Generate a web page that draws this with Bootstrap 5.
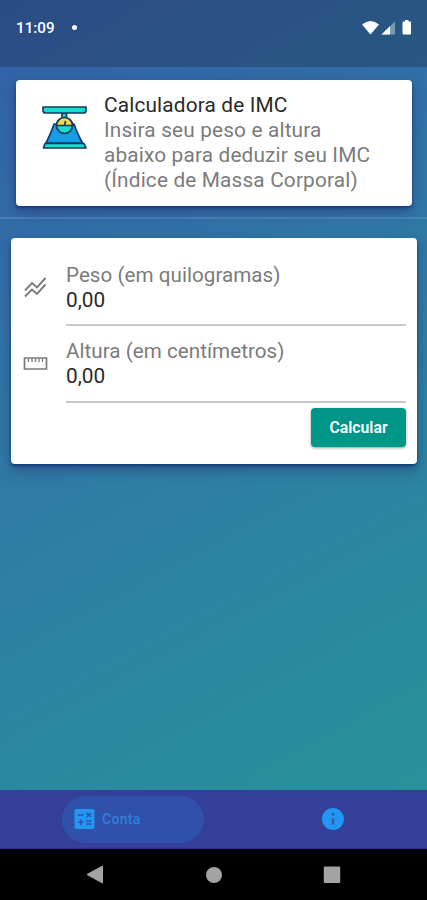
<!DOCTYPE html>
<html lang="pt-BR">
<head>
<meta charset="utf-8">
<meta name="viewport" content="width=device-width, initial-scale=1">
<title>Calculadora de IMC</title>
<link href="https://cdn.jsdelivr.net/npm/bootstrap@5.3.0/dist/css/bootstrap.min.css" rel="stylesheet">
<style>
body{font-family:Roboto,"Liberation Sans",sans-serif;background:#000}
.screen{height:900px;overflow:hidden}
.app-area{height:790px;background:linear-gradient(151.6deg,#345fa9 0%,#2f79a5 45%,#28929c 100%)}
.statusbar{height:67px;background:rgba(22,30,45,.29);color:#fff;font-size:15.2px;font-weight:500;padding:0 15px 11px 16px}
.dot{width:5px;height:5px;margin:0 0 2px 17px;background:#fff}
.header-zone{height:152px;padding:13px 15px 0 16px;border-bottom:2px solid rgba(110,155,205,.42)}
.panel{border:0;border-radius:4px;box-shadow:0 2px 3px rgba(0,45,110,.65),0 6px 13px rgba(45,45,115,.5)}
.intro{height:126px;padding:13px 0 0 24px;gap:16px}
.copy{font-size:20.8px;line-height:25px;letter-spacing:.16px;color:#7b7b7b}
.copy .title{color:#2a2a2a}
.scale-icon{margin-top:10px}
.form-zone{padding:19px 10px 0 11px}
.calc{height:226px;padding:25px 11px 0 12px}
.entry{height:64px;gap:17px}
.entry-one{height:76px}
.entry svg{margin-top:12px}
.entry label{display:block;white-space:nowrap;font-size:20.6px;letter-spacing:.04px}
.value,.value:focus{border:0;border-bottom:2px solid #c8c8c8;border-radius:0;box-shadow:none;padding:0 0 12px;color:#2a2a2a;font-size:20.8px;line-height:25px;height:38px}
.entry-two .value{height:39px;padding-bottom:13px}
.go{width:95px;height:39px;margin-top:5px;padding:0;border:0;border-radius:4px;background:#009688;color:#fff;font-size:15.8px;font-weight:600;box-shadow:0 1px 3px rgba(0,0,0,.4)}
.tabs{height:59px;background:#333f98;border-bottom:1px solid #382c8d;color:#2196f3}
.tab-on{width:142px;height:47px;margin-left:62px;padding-left:11px;gap:5px;background:#2f51a9;font-size:14px;font-weight:500;letter-spacing:.3px;color:#2c82dc}
.info{margin-left:117px}
.sysnav{height:51px;padding:0 86px}
</style>
</head>
<body>
<div class="screen d-flex flex-column">
  <main class="app-area">
    <div class="statusbar d-flex align-items-center">
      <span>11:09</span><span class="dot rounded-circle"></span>
      <svg class="ms-auto" width="50" height="16" viewBox="0 0 50 16" aria-hidden="true">
        <path d="M0 4.500Q8.500-2.500 17 4.500L8.500 14.500Z" fill="#fff"/>
        <path d="M33 1.500V14.500H19.500Z" fill="#fff" opacity=".4"/>
        <path d="M28 6.300V14.500H19.500Z" fill="#fff"/>
        <path d="M43 1.500V0H46.500V1.500H48Q49 1.500 49 2.500V13.500Q49 14.500 48 14.500H41.500Q40.500 14.500 40.500 13.500V2.500Q40.500 1.500 41.500 1.500Z" fill="#fff"/>
      </svg>
    </div>
    <section class="header-zone">
      <div class="card panel intro flex-row align-items-start">
        <svg class="scale-icon flex-shrink-0" width="48" height="48" viewBox="0 0 48 48" stroke="#123b62" stroke-width="1.700" stroke-linejoin="round" aria-hidden="true">
          <path d="M22 10H26.500V16H22Z" fill="#18d8cf"/>
          <path d="M14 21H34Q36.500 29 42.500 40H6Q11.500 29 14 21Z" fill="#169ee5"/>
          <path d="M3 4H46V7.500Q46 10 43.500 10H5.500Q3 10 3 7.500Z" fill="#14dfce"/>
          <circle cx="24.500" cy="22.500" r="8" fill="#14dfce"/>
          <path d="M16.500 22.500A8 8 0 0 1 32.500 22.500Z" fill="#f4d64e"/>
          <path d="M24.500 22.500L25.500 18" fill="none"/>
          <path d="M5 40.500H44L46 45H3.500Z" fill="#14dfce"/>
        </svg>
        <div class="copy text-nowrap"><div class="title">Calculadora de IMC</div>Insira seu peso e altura<br>abaixo para deduzir seu IMC<br>(Índice de Massa Corporal)</div>
      </div>
    </section>
    <section class="form-zone">
      <form class="card panel calc">
        <div class="entry entry-one d-flex align-items-start">
          <svg class="flex-shrink-0" width="26" height="26" viewBox="0 0 26 26" fill="none" stroke="#7b7b7b" stroke-width="1.900" aria-hidden="true">
            <path d="M2 15.500L9 8L14 12.500L22.500 3M2 21.500L9 14.500L14 19L22.500 9.500"/>
          </svg>
          <div class="flex-grow-1"><label class="copy" for="peso">Peso (em quilogramas)</label><input class="form-control value bg-transparent" id="peso" value="0,00"></div>
        </div>
        <div class="entry entry-two d-flex align-items-start">
          <svg class="flex-shrink-0" width="26" height="26" viewBox="0 0 26 26" fill="none" stroke="#7b7b7b" stroke-width="1.700" aria-hidden="true">
            <path d="M1.500 7H23.500V18H1.500Z"/><path d="M5.500 7.500V11M9 7.500V11M12.500 7.500V11M16 7.500V11M19.500 7.500V11" stroke-width="1.300"/>
          </svg>
          <div class="flex-grow-1"><label class="copy" for="altura">Altura (em centímetros)</label><input class="form-control value bg-transparent" id="altura" value="0,00"></div>
        </div>
        <button class="btn go align-self-end flex-shrink-0" type="button">Calcular</button>
      </form>
    </section>
  </main>
  <nav class="tabs d-flex align-items-center flex-shrink-0">
    <a href="#" class="tab-on rounded-pill d-flex align-items-center text-decoration-none">
      <svg width="24" height="24" viewBox="0 0 24 24" aria-hidden="true">
        <rect x="1.500" y="2" width="20" height="20" rx="2" fill="#2196f3"/>
        <path d="M5 8H10.500M13.500 6L18 10M18 6L13.500 10M7.750 12.500V18M5 15.250H10.500M13 14H18.500M13 17H18.500" fill="none" stroke="#2f51a9" stroke-width="1.500"/>
      </svg>Conta
    </a>
    <a href="#" class="info d-flex" aria-label="Info"><svg width="24" height="24" viewBox="0 0 24 24"><circle cx="12" cy="12" r="11" fill="#2196f3"/><path d="M12 6V8.500M12 11V17.500" stroke="#305cad" stroke-width="2.500"/></svg></a>
  </nav>
  <div class="sysnav bg-black d-flex justify-content-between align-items-center flex-shrink-0">
    <svg width="18" height="20" viewBox="0 0 18 20" aria-hidden="true"><path d="M1 9.500L16.500 1V18Z" fill="#a3a3a3" stroke="#a3a3a3" stroke-linejoin="round"/></svg>
    <svg width="18" height="18" viewBox="0 0 18 18" aria-hidden="true"><circle cx="9" cy="9" r="8" fill="#a3a3a3"/></svg>
    <svg width="18" height="18" viewBox="0 0 18 18" aria-hidden="true"><rect x=".8" y=".6" width="16.400" height="16.400" rx="1" fill="#a3a3a3"/></svg>
  </div>
</div>
<script src="https://cdn.jsdelivr.net/npm/bootstrap@5.3.0/dist/js/bootstrap.bundle.min.js"></script>
</body>
</html>
